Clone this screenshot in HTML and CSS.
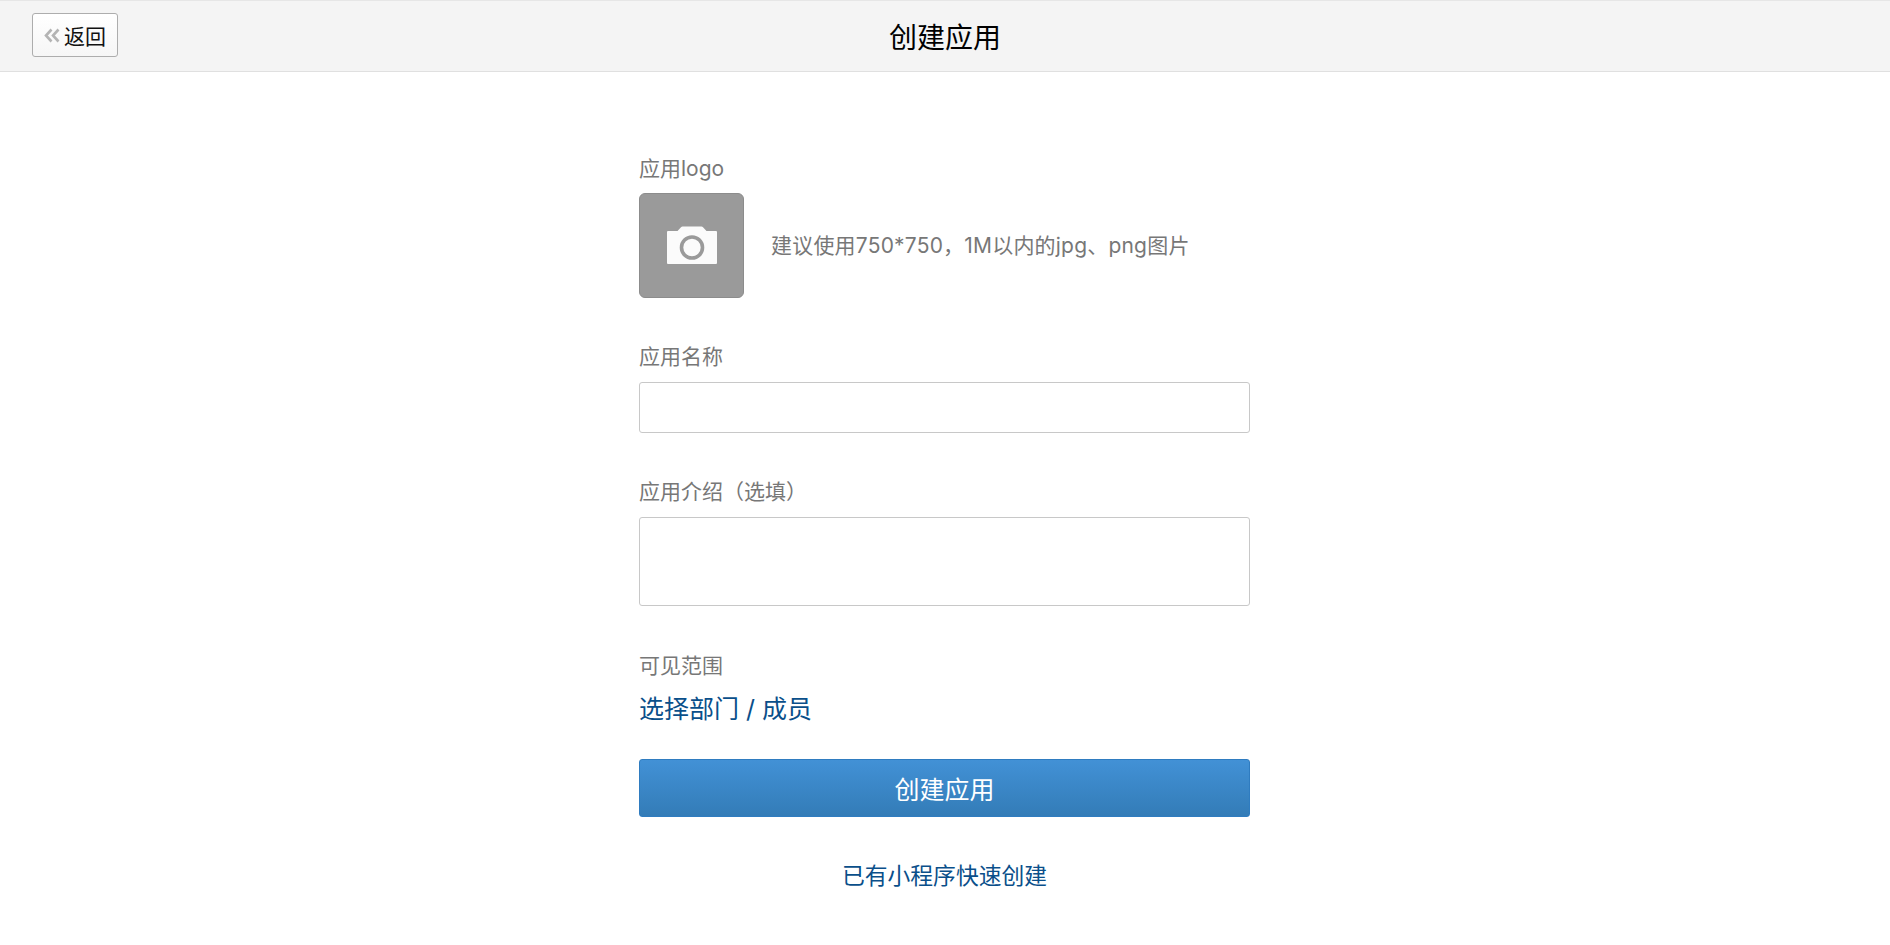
FILE: index.html
```html
<!DOCTYPE html>
<html lang="zh-CN">
<head>
<meta charset="utf-8">
<title>创建应用</title>
<link rel="stylesheet" href="styles.css">
</head>
<body>
<header class="topbar">
  <a class="back-btn" href="#"><svg class="back-icon" viewBox="0 0 16 14" width="16" height="15"><path d="M7.500 1 2 7l5.500 6M14.500 1 9 7l5.500 6" fill="none" stroke="#b4b4b4" stroke-width="2.600"/></svg><span>返回</span></a>
  <h1 class="title">创建应用</h1>
</header>
<main class="form">
  <div class="label">应用logo</div>
  <div class="logo-row">
    <div class="logo-box">
      <svg class="camera" viewBox="0 0 50 38" width="50" height="38"><path d="M1 5h9.500l3.500-3.800q.6-.7 1.500-.7h19q.9 0 1.500.7L39.500 5H49q1 0 1 1v31q0 1-1 1H1q-1 0-1-1V6q0-1 1-1Z" fill="#fbfbfb"/><circle cx="25" cy="21.500" r="10.500" fill="none" stroke="#9a9a9a" stroke-width="3.600"/></svg>
    </div>
    <div class="hint">建议使用750*750，1M以内的jpg、png图片</div>
  </div>
  <div class="label name-label">应用名称</div>
  <input class="field" type="text">
  <div class="label intro-label">应用介绍（选填）</div>
  <textarea class="field area"></textarea>
  <div class="label scope-label">可见范围</div>
  <a class="link pick" href="#">选择部门 / 成员</a>
  <button class="submit" type="button">创建应用</button>
  <a class="link quick" href="#">已有小程序快速创建</a>
</main>
</body>
</html>
```
FILE: styles.css
```css
* { box-sizing: border-box; }
html, body { margin: 0; padding: 0; }
body {
  background: #fff;
  color: #333;
  font-family: "Inter", "Noto Sans CJK SC", "Noto Sans", sans-serif;
  font-size: 18px;
}
.topbar {
  position: relative;
  height: 72px;
  background: #f4f4f4;
  border-top: 1px solid #e6e6e6;
  border-bottom: 1px solid #e0e0e0;
  display: flex;
  align-items: center;
  justify-content: center;
}
.back-btn {
  position: absolute;
  left: 32px;
  top: 12px;
  width: 86px;
  height: 44px;
  display: flex;
  align-items: center;
  justify-content: center;
  gap: 4px;
  background: linear-gradient(#fff, #f6f6f6);
  border: 1px solid #adadad;
  border-radius: 3px;
  color: #111;
  font-size: 21px;
  text-decoration: none;
}
.title {
  margin: 0;
  font-size: 28px;
  font-weight: 400;
  color: #000;
}
.form {
  width: 611px;
  margin: 0 0 0 639px;
  padding-top: 83px;
  display: flex;
  flex-direction: column;
}
.label {
  color: #777;
  font-size: 21px;
  line-height: 28px;
  height: 28px;
}
.logo-row {
  margin-top: 10px;
  display: flex;
  align-items: center;
  gap: 27px;
}
.logo-box {
  width: 105px;
  height: 105px;
  display: flex;
  align-items: center;
  justify-content: center;
  background: #9a9a9a;
  border: 1px solid #8c8c8c;
  border-radius: 6px;
}
.camera { margin-bottom: 2px; }
.hint {
  color: #777;
  font-size: 21px;
  line-height: 28px;
  letter-spacing: 0.2px;
}
.name-label { margin-top: 45px; }
.intro-label { margin-top: 45px; }
.scope-label { margin-top: 46px; }
.field {
  display: block;
  width: 100%;
  height: 51px;
  margin-top: 11px;
  background: #fff;
  border: 1px solid #c8c8c8;
  border-radius: 3px;
  resize: none;
  outline: none;
}
.area { height: 89px; }
.link {
  color: #0a4f8a;
  text-decoration: none;
}
.pick {
  margin-top: 12px;
  font-size: 25px;
  line-height: 34px;
}
.submit {
  margin-top: 33px;
  height: 58px;
  background: linear-gradient(#4291d6, #337cb7);
  border: 1px solid #2f7cc0;
  border-radius: 3px;
  color: #fff;
  font-family: inherit;
  font-size: 25px;
}
.quick {
  margin-top: 42px;
  text-align: center;
  font-size: 22.800px;
  line-height: 34px;
}
```
